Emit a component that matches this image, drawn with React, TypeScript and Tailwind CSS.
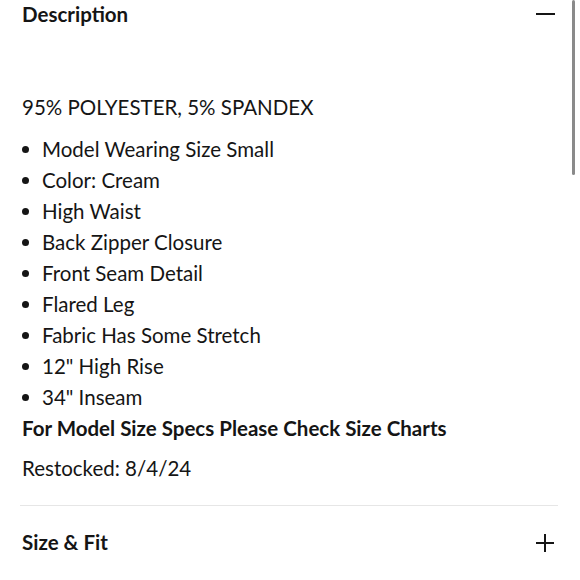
import React from "react";

const items = [
  "Model Wearing Size Small",
  "Color: Cream",
  "High Waist",
  "Back Zipper Closure",
  "Front Seam Detail",
  "Flared Leg",
  "Fabric Has Some Stretch",
  '12" High Rise',
  '34" Inseam',
];

export default function App() {
  return (
    <div
      className="relative w-[580px] h-[580px] overflow-hidden bg-white text-[#151515]"
      style={{ fontFamily: "Lato, 'Open Sans', sans-serif" }}
    >
      <div className="absolute right-[5px] top-0 w-[3px] h-[175px] rounded-full bg-[#8a8a8a]" />
      <div className="pl-[22px] pr-[22px]">
        <div className="flex items-center justify-between h-[28px]">
          <span className="text-[20.5px] font-bold leading-[28px]">Description</span>
          <span className="block w-[19px] h-[2px] bg-[#151515] mr-[3px]" />
        </div>
        <div className="mt-[64px] text-[20.5px] leading-[31px]">95% POLYESTER, 5% SPANDEX</div>
        <ul className="mt-[11px] text-[20.5px] leading-[31px]">
          {items.map((t) => (
            <li key={t} className="flex items-center">
              <span className="block w-[7px] h-[7px] rounded-full bg-[#151515] mr-[13px]" />
              <span>{t}</span>
            </li>
          ))}
        </ul>
        <div className="text-[20.5px] font-bold leading-[31px]">For Model Size Specs Please Check Size Charts</div>
        <div className="mt-[9px] text-[20.5px] leading-[31px]">Restocked: 8/4/24</div>
        <div className="mt-[21px] h-px bg-[#e6e6e6] w-[538px] -ml-[2px]" />
        <div className="flex items-center justify-between h-[72px]">
          <span className="text-[20.5px] font-bold">Size &amp; Fit</span>
          <svg width="20" height="20" viewBox="0 0 20 20" className="mr-[3px] mt-[2px]">
            <path d="M10 1v18M1 10h18" stroke="#151515" strokeWidth="2" />
          </svg>
        </div>
      </div>
    </div>
  );
}
